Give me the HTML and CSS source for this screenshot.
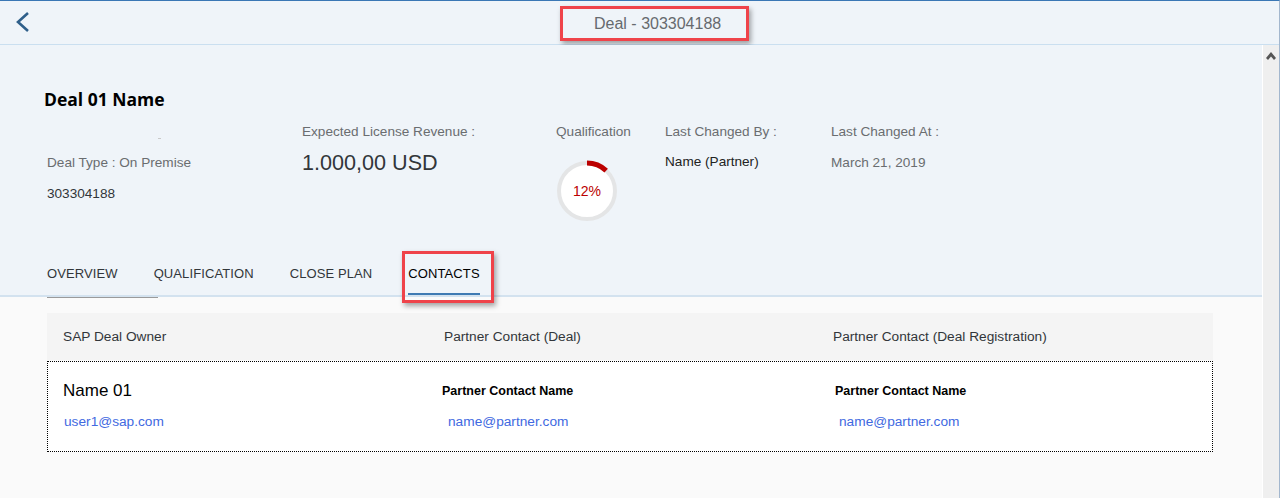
FILE: index.html
```html
<!DOCTYPE html>
<html>
<head>
<meta charset="utf-8">
<link rel="stylesheet" href="styles.css">
</head>
<body>
<div class="app">
  <header class="topbar">
    <button class="back" aria-label="Back">
      <svg width="14" height="22" viewBox="0 0 14 22"><polyline points="12,2 2,11 12,20" fill="none" stroke="#2f5f8a" stroke-width="2.6" stroke-linejoin="miter"/></svg>
    </button>
    <div class="title-box">Deal - 303304188</div>
  </header>
  <div class="body">
    <main class="page">
      <section class="objhead">
        <h1 class="objtitle">Deal 01 Name</h1>
        <div class="attrs">
          <div class="col c1">
            <div class="line blank"><span class="dash"></span></div>
            <div class="line label gap15">Deal Type : On Premise</div>
            <div class="line value gap15">303304188</div>
          </div>
          <div class="col c2">
            <div class="line label">Expected License Revenue :</div>
            <div class="big">1.000,00 USD</div>
          </div>
          <div class="col c3">
            <div class="line label">Qualification</div>
            <div class="donut">
              <svg width="62" height="62" viewBox="0 0 62 62">
                <circle cx="31" cy="31" r="28" fill="#fff" stroke="#e4e5e6" stroke-width="4"/>
                <circle cx="31" cy="31" r="28" fill="none" stroke="#bb0000" stroke-width="5" stroke-dasharray="21.1 200" transform="rotate(-90 31 31)"/>
              </svg>
              <span class="pct">12%</span>
            </div>
          </div>
          <div class="col c4">
            <div class="line label">Last Changed By :</div>
            <div class="line dark gap14">Name (Partner)</div>
          </div>
          <div class="col c5">
            <div class="line label">Last Changed At :</div>
            <div class="line label gap15">March 21, 2019</div>
          </div>
        </div>
        <nav class="tabs">
          <div class="tab">OVERVIEW</div>
          <div class="tab">QUALIFICATION</div>
          <div class="tab">CLOSE PLAN</div>
          <div class="tab active">CONTACTS<span class="mark"></span></div>
        </nav>
      </section>
      <section class="content">
        <div class="stub"></div>
        <div class="thead">
          <div>SAP Deal Owner</div>
          <div>Partner Contact (Deal)</div>
          <div>Partner Contact (Deal Registration)</div>
        </div>
        <div class="trow">
          <div class="cell">
            <div class="name">Name 01</div>
            <div class="mail">user1@sap.com</div>
          </div>
          <div class="cell shift2">
            <div class="name bold">Partner Contact Name</div>
            <div class="mail m2">name@partner.com</div>
          </div>
          <div class="cell shift3">
            <div class="name bold">Partner Contact Name</div>
            <div class="mail m3">name@partner.com</div>
          </div>
        </div>
      </section>
    </main>
    <aside class="scrollbar">
      <svg width="10" height="8" viewBox="0 0 10 8"><polygon points="5,0 10,6 8,8 5,4.5 2,8 0,6" fill="#555"/></svg>
    </aside>
  </div>
</div>
</body>
</html>
```
FILE: styles.css
```css
* { box-sizing: border-box; }
html, body { margin: 0; padding: 0; }
body {
  font-family: "Liberation Sans", Arial, sans-serif;
  width: 1280px;
  height: 498px;
  overflow: hidden;
  background: #fafafa;
}
.app {
  width: 1280px;
  height: 498px;
  border-top: 1px solid #3a77b5;
  border-right: 1px solid #a3b7ce;
  display: flex;
  flex-direction: column;
}
.topbar {
  height: 44px;
  flex: none;
  background: #eff4f9;
  border-bottom: 1px solid #cadff0;
  display: flex;
  align-items: flex-start;
}
.back {
  width: 44px;
  height: 43px;
  border: 0;
  background: transparent;
  padding: 10px 0 0 16px;
  display: flex;
  align-items: flex-start;
}
.title-box {
  margin-left: 516px;
  margin-top: 5px;
  border: 3px solid #ef434a;
  box-shadow: 2px 3px 5px rgba(0,0,0,0.35);
  padding: 5px 25px 5px 31px;
  height: 35px;
  font-size: 16px;
  line-height: 19px;
  color: #666a6e;
}
.body {
  flex: 1;
  display: flex;
  min-height: 0;
}
.page {
  flex: 1;
  display: flex;
  flex-direction: column;
  background: #fafafa;
}
.scrollbar {
  width: 17px;
  flex: none;
  background: #efefef;
  border-left: 1px solid #ffffff;
  display: flex;
  justify-content: center;
  padding-top: 7px;
}
.objhead {
  background: #eff4f9;
  padding: 44px 0 0 44px;
  border-bottom: 2px solid #d3e2ef;
}
.objtitle {
  margin: 0;
  font-family: "Open Sans", "Noto Sans", sans-serif;
  font-weight: 700;
  font-size: 17.5px;
  line-height: 20px;
  color: #000;
}
.attrs {
  display: flex;
  margin-top: 15px;
  margin-left: 3px;
}
.col { display: flex; flex-direction: column; }
.c1 { width: 255px; }
.c2 { width: 254px; }
.c3 { width: 109px; }
.c4 { width: 166px; }
.c5 { width: 200px; }
.line {
  font-size: 13.6px;
  line-height: 16px;
  height: 16px;
  white-space: nowrap;
}
.label { color: #6a6d70; }
.value { color: #32363a; }
.dark { color: #222; }
.gap15 { margin-top: 15px; }
.gap14 { margin-top: 14px; }
.blank { position: relative; }
.dash {
  display: block;
  width: 3px;
  height: 1px;
  background: #c9c9c9;
  margin: 14px 0 0 111px;
}
.big {
  margin-top: 11px;
  font-size: 21.6px;
  line-height: 24px;
  color: #32363a;
}
.donut {
  position: relative;
  width: 62px;
  height: 62px;
  margin-top: 20px;
}
.donut svg { display: block; }
.pct {
  position: absolute;
  left: 0; right: 0;
  top: 22px;
  text-align: center;
  font-size: 14px;
  line-height: 18px;
  color: #bb0000;
}
.tabs {
  display: flex;
  gap: 36px;
  margin-top: 44px;
  margin-left: 3px;
}
.tab {
  position: relative;
  font-size: 13px;
  letter-spacing: 0.1px;
  line-height: 16px;
  padding-bottom: 13px;
  color: #32363a;
}
.tab.active {
  color: #000;
  box-shadow: inset 0 -2px 0 #3f7ab3;
}
.mark {
  position: absolute;
  left: -6px;
  top: -15px;
  width: 92px;
  height: 52px;
  border: 3px solid #ef434a;
  box-shadow: 2px 3px 5px rgba(0,0,0,0.35);
  z-index: 2;
}
.content {
  padding: 0 49px 0 47px;
}
.stub {
  width: 111px;
  height: 1px;
  background: #9a9a9a;
}
.thead {
  margin-top: 15px;
  height: 47px;
  background: #f4f4f4;
  display: grid;
  grid-template-columns: 381px 389px 1fr;
  padding-left: 16px;
  padding-bottom: 1px;
  align-items: center;
  font-size: 13.7px;
  color: #32363a;
}
.trow {
  margin-top: 1px;
  background: #fff;
  border: 1px dotted #000;
  display: grid;
  grid-template-columns: 381px 389px 1fr;
  padding: 19px 0 21px 15px;
}
.name {
  font-size: 17px;
  line-height: 20px;
  height: 20px;
  color: #000;
}
.name.bold {
  font-size: 12.5px;
  font-weight: 700;
}
.shift2 { margin-left: -2px; }
.shift3 { margin-left: 2px; }
.mail {
  margin-top: 13px;
  font-size: 13.7px;
  line-height: 16px;
  color: #4169e1;
  padding-left: 1px;
}
.m2 { padding-left: 6px; }
.m3 { padding-left: 4px; }
```
